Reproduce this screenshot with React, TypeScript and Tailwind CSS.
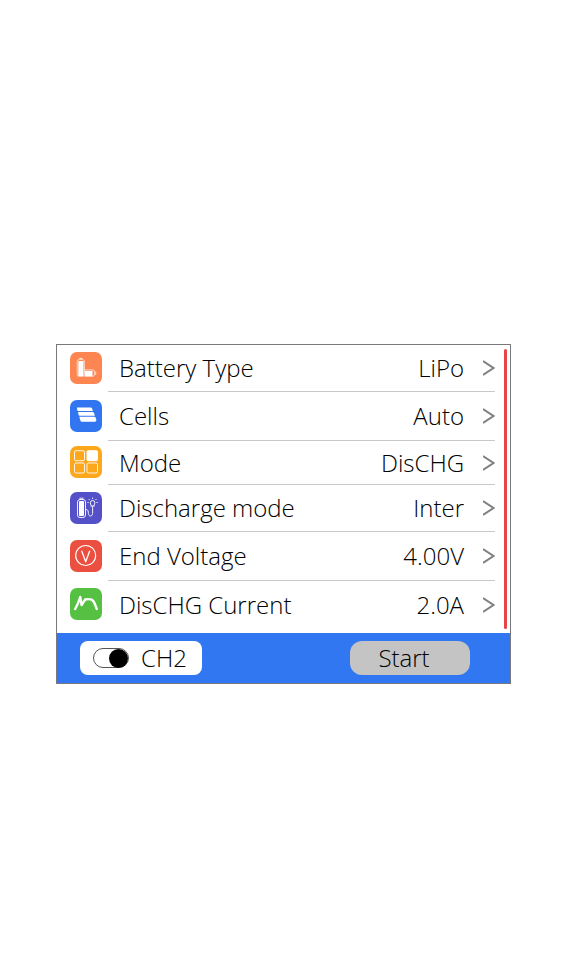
import { useState, type ReactNode } from "react"

type Setting = {
  label: string
  value: string
  tile: string
  height: string
  icon: ReactNode
}

const settings: Setting[] = [
  {
    label: "Battery Type",
    value: "LiPo",
    tile: "bg-[#fd8551]",
    height: "h-[47px]",
    icon: (
      <>
        <rect x="7.2" y="7.5" width="7.3" height="17" rx="2" stroke="#fff" strokeWidth="0.6" fill="none" />
        <path d="M9.4 6.4h3" stroke="#fff" strokeWidth="0.9" />
        <rect x="8.3" y="9" width="5.2" height="15" fill="#fff" />
        <path d="M14.5 17.8h8q2 0 2 2v2.7q0 2-2 2h-8" stroke="#fff" strokeWidth="0.6" fill="none" />
        <rect x="14.8" y="18.8" width="7.7" height="5.2" fill="#fff" />
        <path d="M25.7 19.5v3.5" stroke="#fff" strokeWidth="0.7" />
      </>
    ),
  },
  {
    label: "Cells",
    value: "Auto",
    tile: "bg-[#3175f0]",
    height: "h-[49px]",
    icon: (
      <g fill="#fff">
        <path d="M7 7.6h13.5q1.3 0 1.7 1.2l.7 2.2H8.2q-.9 0-1-.9z" />
        <path d="M8 12.1h14.600q1.200 0 1.500 1.100l.8 2.500H9.600q-.9 0-1-.9z" />
        <path d="M9.3 16.8h14.900q1.200 0 1.500 1l.6 2.300q.4 1.700-1.400 1.700H12q-1.300 0-1.600-1.200z" />
      </g>
    ),
  },
  {
    label: "Mode",
    value: "DisCHG",
    tile: "bg-[#fca71c]",
    height: "h-[44px]",
    icon: (
      <g stroke="#fff" strokeWidth="0.9" fill="none">
        <rect x="4.5" y="4.7" width="10" height="10" rx="1.5" />
        <rect x="17" y="4.7" width="10.5" height="10" rx="1" fill="#fff" />
        <rect x="4.5" y="17" width="10" height="10" rx="1.5" />
        <rect x="17" y="17" width="10.5" height="10" rx="1.5" />
      </g>
    ),
  },
  {
    label: "Discharge mode",
    value: "Inter",
    tile: "bg-[#5350c8]",
    height: "h-[47px]",
    icon: (
      <>
        <rect x="9" y="9" width="5" height="15" rx="1" fill="#fff" />
        <g stroke="#fff" strokeWidth="0.9" fill="none" strokeLinecap="round">
          <rect x="7.5" y="7.5" width="8" height="18" rx="2.5" />
          <path d="M9.8 6.2h3.4" />
          <path d="M16 17.5c2.5-.5 2.2 2.500 2.400 4s.8 2.700 2.300 2.500c1.800-.2 1.900-2 1.900-4v-5.500" />
          <path d="M20.8 14h3.600M21.300 13.500q-1-1.500-1-2.700a2.300 2.300 0 0 1 4.600 0q0 1.200-1 2.700" />
          <path d="M22.600 6v.6M19 7.300l.4.400M26.200 7.300l-.4.400M17.800 10.500h.5M26.900 10.500h.5" />
        </g>
      </>
    ),
  },
  {
    label: "End Voltage",
    value: "4.00V",
    tile: "bg-[#ea4f40]",
    height: "h-[49px]",
    icon: (
      <g stroke="#fff" fill="none" strokeLinecap="round" strokeLinejoin="round">
        <circle cx="15.7" cy="15.5" r="10" strokeWidth="1.2" />
        <path d="M11.8 11.2l3.900 10.600 3.900-10.600" strokeWidth="1.3" />
      </g>
    ),
  },
  {
    label: "DisCHG Current",
    value: "2.0A",
    tile: "bg-[#56c043]",
    height: "h-[47px]",
    icon: (
      <path
        d="M5.2 21c1.800-3 3.700-7.500 5-12l1.400 8 3.600-5.500c2.800-.5 5.300-.4 6.800.4 2.800 1.500 3.200 5.600 4.800 9.100"
        stroke="#fff"
        strokeWidth="2.4"
        fill="none"
        strokeLinecap="round"
        strokeLinejoin="round"
      />
    ),
  },
]

function SettingRow({ item, last }: { item: Setting; last: boolean }) {
  return (
    <button type="button" className={`flex w-full items-center text-left ${item.height}`}>
      <span className={`mb-0.5 size-8 shrink-0 rounded-[7px] ${item.tile}`}>
        <svg viewBox="0 0 32 32" className="size-8">{item.icon}</svg>
      </span>
      <span className={`ml-1.5 flex h-full flex-1 items-center pl-[11px] ${last ? "" : "border-b border-[#c6c9cc]"}`}>
        <span className="flex-1">{item.label}</span>
        <span>{item.value}</span>
        <svg viewBox="0 0 12 16" className="ml-[19px] h-4 w-3" fill="none" stroke="#808080" strokeWidth="2">
          <path d="M0 1l10.500 7L0 15" />
        </svg>
      </span>
    </button>
  )
}

export default function App() {
  const [channelTwo, setChannelTwo] = useState(true)

  return (
    <div className="min-h-screen bg-white px-14 pt-86 pb-14 font-['Open_Sans',sans-serif] text-2xl font-light text-black">
      <main className="border border-[#77797c]">
        <div className="flex pr-[3px]">
          <div className="flex-1 pr-[9px] pb-[5px] pl-[13px]">
            {settings.map((item, i) => (
              <SettingRow key={item.label} item={item} last={i === settings.length - 1} />
            ))}
          </div>
          <div className="my-1 w-[3px] rounded-full bg-[#e5444b]" />
        </div>

        <div className="flex h-[50px] items-center justify-between bg-[#3277f2] pr-10 pl-[23px]">
          <label className="flex h-[34px] w-[122px] items-center rounded-lg bg-white pl-[13px]">
            <input
              type="checkbox"
              role="switch"
              checked={channelTwo}
              onChange={(e) => setChannelTwo(e.target.checked)}
              className="peer sr-only"
            />
            <span className="flex h-5 w-9 items-center rounded-full border border-[#555] peer-checked:justify-end">
              <span className="size-[19px] shrink-0 rounded-full bg-black" />
            </span>
            <span className="ml-3">CH2</span>
          </label>
          <button type="button" className="h-[34px] w-[120px] rounded-xl bg-[#c4c4c4] pr-3 leading-8">
            Start
          </button>
        </div>
      </main>
    </div>
  )
}
